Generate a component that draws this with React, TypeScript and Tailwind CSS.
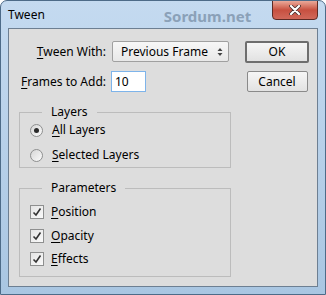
import React from "react";

const font = { fontFamily: '"Segoe UI", "Noto Sans", "Open Sans", sans-serif' };

function Mn({ c }: { c: string }) {
  return <span className="underline underline-offset-2">{c}</span>;
}

function Radio({ checked }: { checked?: boolean }) {
  return (
    <span className="flex h-[13px] w-[13px] items-center justify-center rounded-full border border-[#8e8f8f] bg-gradient-to-br from-[#d6d6d6] to-[#fbfbfb]">
      {checked && <span className="h-[5px] w-[5px] rounded-full bg-[#2a2a2a]" />}
    </span>
  );
}

function Check() {
  return (
    <span className="flex h-[14px] w-[14px] items-center justify-center border border-[#8e8f8f] bg-gradient-to-br from-[#e4e4e4] to-[#fafafa]">
      <svg width="10" height="10" viewBox="0 0 10 10">
        <path d="M1.5 5.5 L4 8 L8.5 1.5" fill="none" stroke="#333" strokeWidth="1.6" />
      </svg>
    </span>
  );
}

export default function App() {
  return (
    <div
      className="relative h-[295px] w-[326px] overflow-hidden rounded-t-[7px] border border-[#4d6b88] bg-gradient-to-b from-[#c4daf0] via-[#b7d0e9] to-[#a9c6e2] text-[12px] text-black"
      style={font}
    >
      {/* title bar */}
      <div className="flex h-[27px] items-start">
        <span className="ml-[7px] mt-[6px] leading-[15px]">Tween</span>
        <span className="ml-[119px] mt-[6px] text-[15px] font-bold leading-[18px] text-[#8ba1b8]">
          Sordum.net
        </span>
      </div>
      <div className="absolute right-[7px] top-[-1px] flex h-[20px] w-[46px] items-center justify-center rounded-b-[4px] border border-[#5d2b25] bg-gradient-to-b from-[#e9a99a] via-[#c75040] to-[#d0685a]">
        <svg width="12" height="10" viewBox="0 0 12 10">
          <path d="M2 1 L10 9 M10 1 L2 9" stroke="#3b2a2a" strokeWidth="3.6" strokeLinecap="round" />
          <path d="M2 1 L10 9 M10 1 L2 9" stroke="#fff" strokeWidth="2.2" strokeLinecap="round" />
        </svg>
      </div>

      {/* client area */}
      <div className="mx-[7px] flex h-[259px] border border-[#6d7f92] bg-[#dddddd]">
        <div className="flex w-[228px] flex-col">
          <div className="mt-[12px] flex items-center">
            <span className="w-[97px] text-right leading-[20px]">
              <Mn c="T" />ween With:
            </span>
            <div className="ml-[6px] flex h-[21px] w-[117px] items-center justify-between rounded-[2px] border border-[#a0a0a0] bg-gradient-to-b from-[#f7f7f7] to-[#e8e8e8] pl-[8px] pr-[5px]">
              <span>Previous Frame</span>
              <svg width="6" height="10" viewBox="0 0 6 10">
                <path d="M0.5 4 L3 1 L5.5 4 Z M0.5 6 L3 9 L5.5 6 Z" fill="#444" />
              </svg>
            </div>
          </div>
          <div className="mt-[9px] flex items-center">
            <span className="w-[97px] text-right leading-[20px]">
              <Mn c="F" />rames to Add:
            </span>
            <div className="ml-[5px] flex h-[21px] w-[35px] items-center border border-[#7eb4ea] bg-white pl-[3px]">
              10
            </div>
          </div>

          <fieldset className="ml-[10px] mt-[13px] h-[63px] w-[212px] border border-[#bcbcbc] pl-[10px]">
            <legend className="ml-[12px] px-[9px] text-[12px] leading-[14px]">Layers</legend>
            <div className="mt-[2px] flex items-center gap-[9px] leading-[18px]">
              <Radio checked />
              <span>
                <Mn c="A" />ll Layers
              </span>
            </div>
            <div className="mt-[7px] flex items-center gap-[9px] leading-[18px]">
              <Radio />
              <span>
                <Mn c="S" />elected Layers
              </span>
            </div>
          </fieldset>

          <fieldset className="ml-[10px] mt-[13px] h-[96px] w-[212px] border border-[#bcbcbc] pl-[10px]">
            <legend className="ml-[12px] px-[9px] text-[12px] leading-[14px]">Parameters</legend>
            <div className="mt-[8px] flex items-center gap-[7px] leading-[18px]">
              <Check />
              <span>
                <Mn c="P" />osition
              </span>
            </div>
            <div className="mt-[6px] flex items-center gap-[7px] leading-[18px]">
              <Check />
              <span>
                <Mn c="O" />pacity
              </span>
            </div>
            <div className="mt-[5px] flex items-center gap-[7px] leading-[18px]">
              <Check />
              <span>
                <Mn c="E" />ffects
              </span>
            </div>
          </fieldset>
        </div>

        <div className="ml-[8px] flex flex-col items-center">
          <button className="mt-[12px] flex h-[22px] w-[64px] items-center justify-center rounded-[2px] border-2 border-[#6e6e6e] bg-gradient-to-b from-[#f6f6f6] to-[#e2e2e2] leading-none">
            OK
          </button>
          <button className="mt-[8px] flex h-[21px] w-[61px] items-center justify-center rounded-[2px] border border-[#8a8a8a] bg-gradient-to-b from-[#f6f6f6] to-[#e2e2e2] leading-none">
            Cancel
          </button>
        </div>
      </div>
    </div>
  );
}
